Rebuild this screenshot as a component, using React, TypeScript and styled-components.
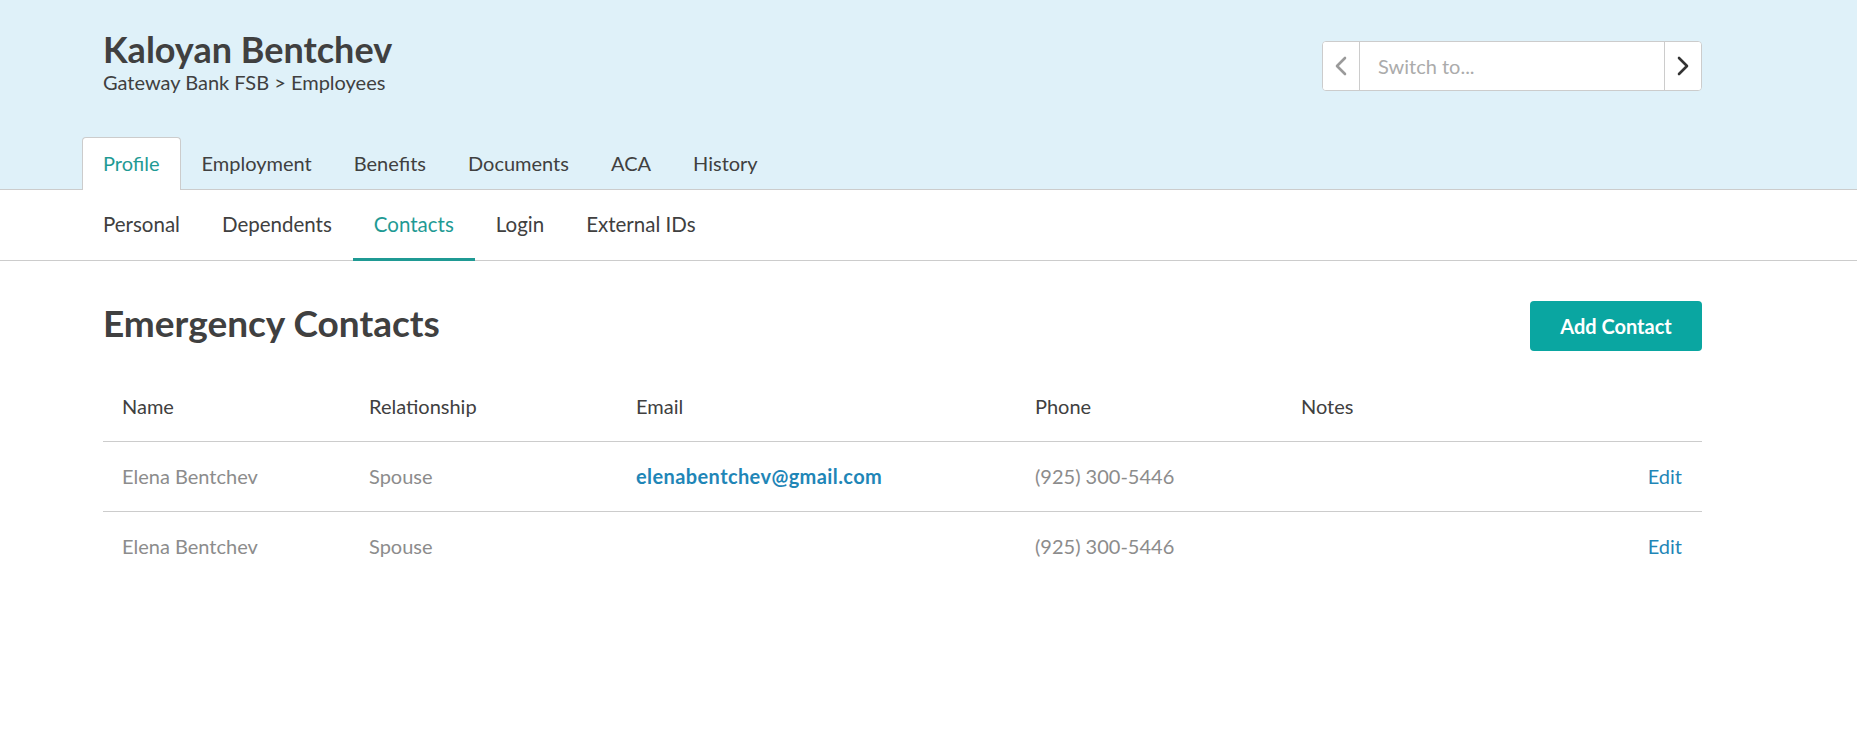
import React from 'react'
import styled, { createGlobalStyle } from 'styled-components'

const GlobalStyle = createGlobalStyle`
  html, body {
    margin: 0;
    padding: 0;
    background: #ffffff;
    font-family: Lato, "Open Sans", sans-serif;
    color: #404040;
  }
  * {
    box-sizing: border-box;
  }
`

const Header = styled.header`
  background-color: #dff1f9;
  border-bottom: 1px solid #cccccc;
`

const Container = styled.div`
  width: 1599px;
  margin-left: 103px;
`

const TopRow = styled.div`
  height: 137px;
  padding-top: 28px;
  display: flex;
  justify-content: space-between;
  align-items: flex-start;
`

const Title = styled.h1`
  margin: 0;
  font-size: 36px;
  line-height: 42px;
  font-weight: 700;
  color: #404040;
`

const Breadcrumb = styled.div`
  font-size: 20px;
  line-height: 24px;
  color: #404040;
`

const Switcher = styled.div`
  margin-top: 13px;
  width: 380px;
  height: 50px;
  display: flex;
  background: #ffffff;
  border: 1px solid #cccccc;
  border-radius: 4px;
  overflow: hidden;
`

const ArrowButton = styled.button<{ $side: 'left' | 'right' }>`
  width: 37px;
  flex: none;
  display: flex;
  align-items: center;
  justify-content: center;
  background: #ffffff;
  border: none;
  padding: 0;
  border-right: ${(p) => (p.$side === 'left' ? '1px solid #cccccc' : 'none')};
  border-left: ${(p) => (p.$side === 'right' ? '1px solid #cccccc' : 'none')};
  color: ${(p) => (p.$side === 'left' ? '#9a9a9a' : '#333333')};
`

const SwitchInput = styled.input`
  flex: 1;
  min-width: 0;
  border: none;
  outline: none;
  padding: 0 18px;
  font-family: inherit;
  font-size: 20px;
  color: #404040;
  &::placeholder {
    color: #ababab;
  }
`

const TabList = styled.nav`
  display: flex;
  margin-left: -21px;
`

const Tab = styled.a<{ $active?: boolean }>`
  height: 53px;
  margin-bottom: -1px;
  padding: 0 20px 2px;
  display: flex;
  align-items: center;
  font-size: 20px;
  text-decoration: none;
  color: ${(p) => (p.$active ? '#1f9a94' : '#404040')};
  background: ${(p) => (p.$active ? '#ffffff' : 'transparent')};
  border: 1px solid ${(p) => (p.$active ? '#cccccc' : 'transparent')};
  border-bottom: none;
  border-radius: 4px 4px 0 0;
  cursor: pointer;
`

const SubNav = styled.div`
  border-bottom: 1px solid #cccccc;
`

const SubNavList = styled.nav`
  display: flex;
  height: 70px;
  margin-left: -21px;
`

const SubNavItem = styled.a<{ $active?: boolean }>`
  height: 71px;
  padding: 0 21px;
  display: flex;
  align-items: center;
  font-size: 20.5px;
  text-decoration: none;
  color: ${(p) => (p.$active ? '#1f9a94' : '#404040')};
  border-bottom: 3px solid ${(p) => (p.$active ? '#1f9a94' : 'transparent')};
  cursor: pointer;
`

const Main = styled.main`
  padding-top: 40px;
`

const SectionHead = styled.div`
  display: flex;
  justify-content: space-between;
  align-items: flex-start;
  height: 50px;
`

const SectionTitle = styled.h2`
  margin: 0;
  font-size: 37px;
  line-height: 44px;
  font-weight: 700;
  color: #404040;
`

const PrimaryButton = styled.button`
  width: 172px;
  height: 50px;
  border: none;
  border-radius: 4px;
  background: #0aa6a1;
  color: #ffffff;
  font-family: inherit;
  font-size: 20px;
  font-weight: 700;
  cursor: pointer;
`

const Table = styled.table`
  width: 100%;
  margin-top: 20px;
  border-collapse: collapse;
  table-layout: fixed;
`

const Th = styled.th<{ $w?: number }>`
  width: ${(p) => (p.$w ? `${p.$w}px` : 'auto')};
  height: 70px;
  padding: 0 19px;
  text-align: left;
  font-size: 20px;
  font-weight: 400;
  color: #404040;
  border-bottom: 1px solid #cccccc;
`

const Row = styled.tr<{ $last?: boolean }>`
  border-bottom: ${(p) => (p.$last ? 'none' : '1px solid #cccccc')};
`

const Td = styled.td<{ $align?: 'left' | 'right' }>`
  height: 70px;
  padding: 0 ${(p) => (p.$align === 'right' ? '20px' : '19px')};
  text-align: ${(p) => p.$align || 'left'};
  font-size: 20px;
  color: #8c8c8c;
`

const Link = styled.a<{ $strong?: boolean }>`
  color: #1f86b7;
  font-weight: ${(p) => (p.$strong ? 700 : 400)};
  letter-spacing: ${(p) => (p.$strong ? '0.4px' : '0')};
  text-decoration: none;
  cursor: pointer;
`

const Chevron = ({ dir }: { dir: 'left' | 'right' }) => (
  <svg width="14" height="20" viewBox="0 0 14 20" fill="none">
    <polyline
      points={dir === 'left' ? '11,2 3,10 11,18' : '3,2 11,10 3,18'}
      stroke="currentColor"
      strokeWidth="2.6"
      strokeLinecap="round"
      strokeLinejoin="round"
    />
  </svg>
)

const tabs = ['Profile', 'Employment', 'Benefits', 'Documents', 'ACA', 'History']
const subTabs = ['Personal', 'Dependents', 'Contacts', 'Login', 'External IDs']

const contacts = [
  { name: 'Elena Bentchev', relationship: 'Spouse', email: 'elenabentchev@gmail.com', phone: '(925) 300-5446', notes: '' },
  { name: 'Elena Bentchev', relationship: 'Spouse', email: '', phone: '(925) 300-5446', notes: '' },
]

export default function App() {
  return (
    <>
      <GlobalStyle />
      <Header>
        <Container>
          <TopRow>
            <div>
              <Title>Kaloyan Bentchev</Title>
              <Breadcrumb>Gateway Bank FSB &gt; Employees</Breadcrumb>
            </div>
            <Switcher>
              <ArrowButton $side="left">
                <Chevron dir="left" />
              </ArrowButton>
              <SwitchInput placeholder="Switch to..." />
              <ArrowButton $side="right">
                <Chevron dir="right" />
              </ArrowButton>
            </Switcher>
          </TopRow>
          <TabList>
            {tabs.map((t) => (
              <Tab key={t} $active={t === 'Profile'}>
                {t}
              </Tab>
            ))}
          </TabList>
        </Container>
      </Header>
      <SubNav>
        <Container>
          <SubNavList>
            {subTabs.map((t) => (
              <SubNavItem key={t} $active={t === 'Contacts'}>
                {t}
              </SubNavItem>
            ))}
          </SubNavList>
        </Container>
      </SubNav>
      <Container>
        <Main>
          <SectionHead>
            <SectionTitle>Emergency Contacts</SectionTitle>
            <PrimaryButton>Add Contact</PrimaryButton>
          </SectionHead>
          <Table>
            <thead>
              <tr>
                <Th $w={247}>Name</Th>
                <Th $w={267}>Relationship</Th>
                <Th $w={399}>Email</Th>
                <Th $w={266}>Phone</Th>
                <Th $w={300}>Notes</Th>
                <Th />
              </tr>
            </thead>
            <tbody>
              {contacts.map((c, i) => (
                <Row key={i} $last={i === contacts.length - 1}>
                  <Td>{c.name}</Td>
                  <Td>{c.relationship}</Td>
                  <Td>{c.email && <Link $strong>{c.email}</Link>}</Td>
                  <Td>{c.phone}</Td>
                  <Td>{c.notes}</Td>
                  <Td $align="right">
                    <Link>Edit</Link>
                  </Td>
                </Row>
              ))}
            </tbody>
          </Table>
        </Main>
      </Container>
    </>
  )
}
